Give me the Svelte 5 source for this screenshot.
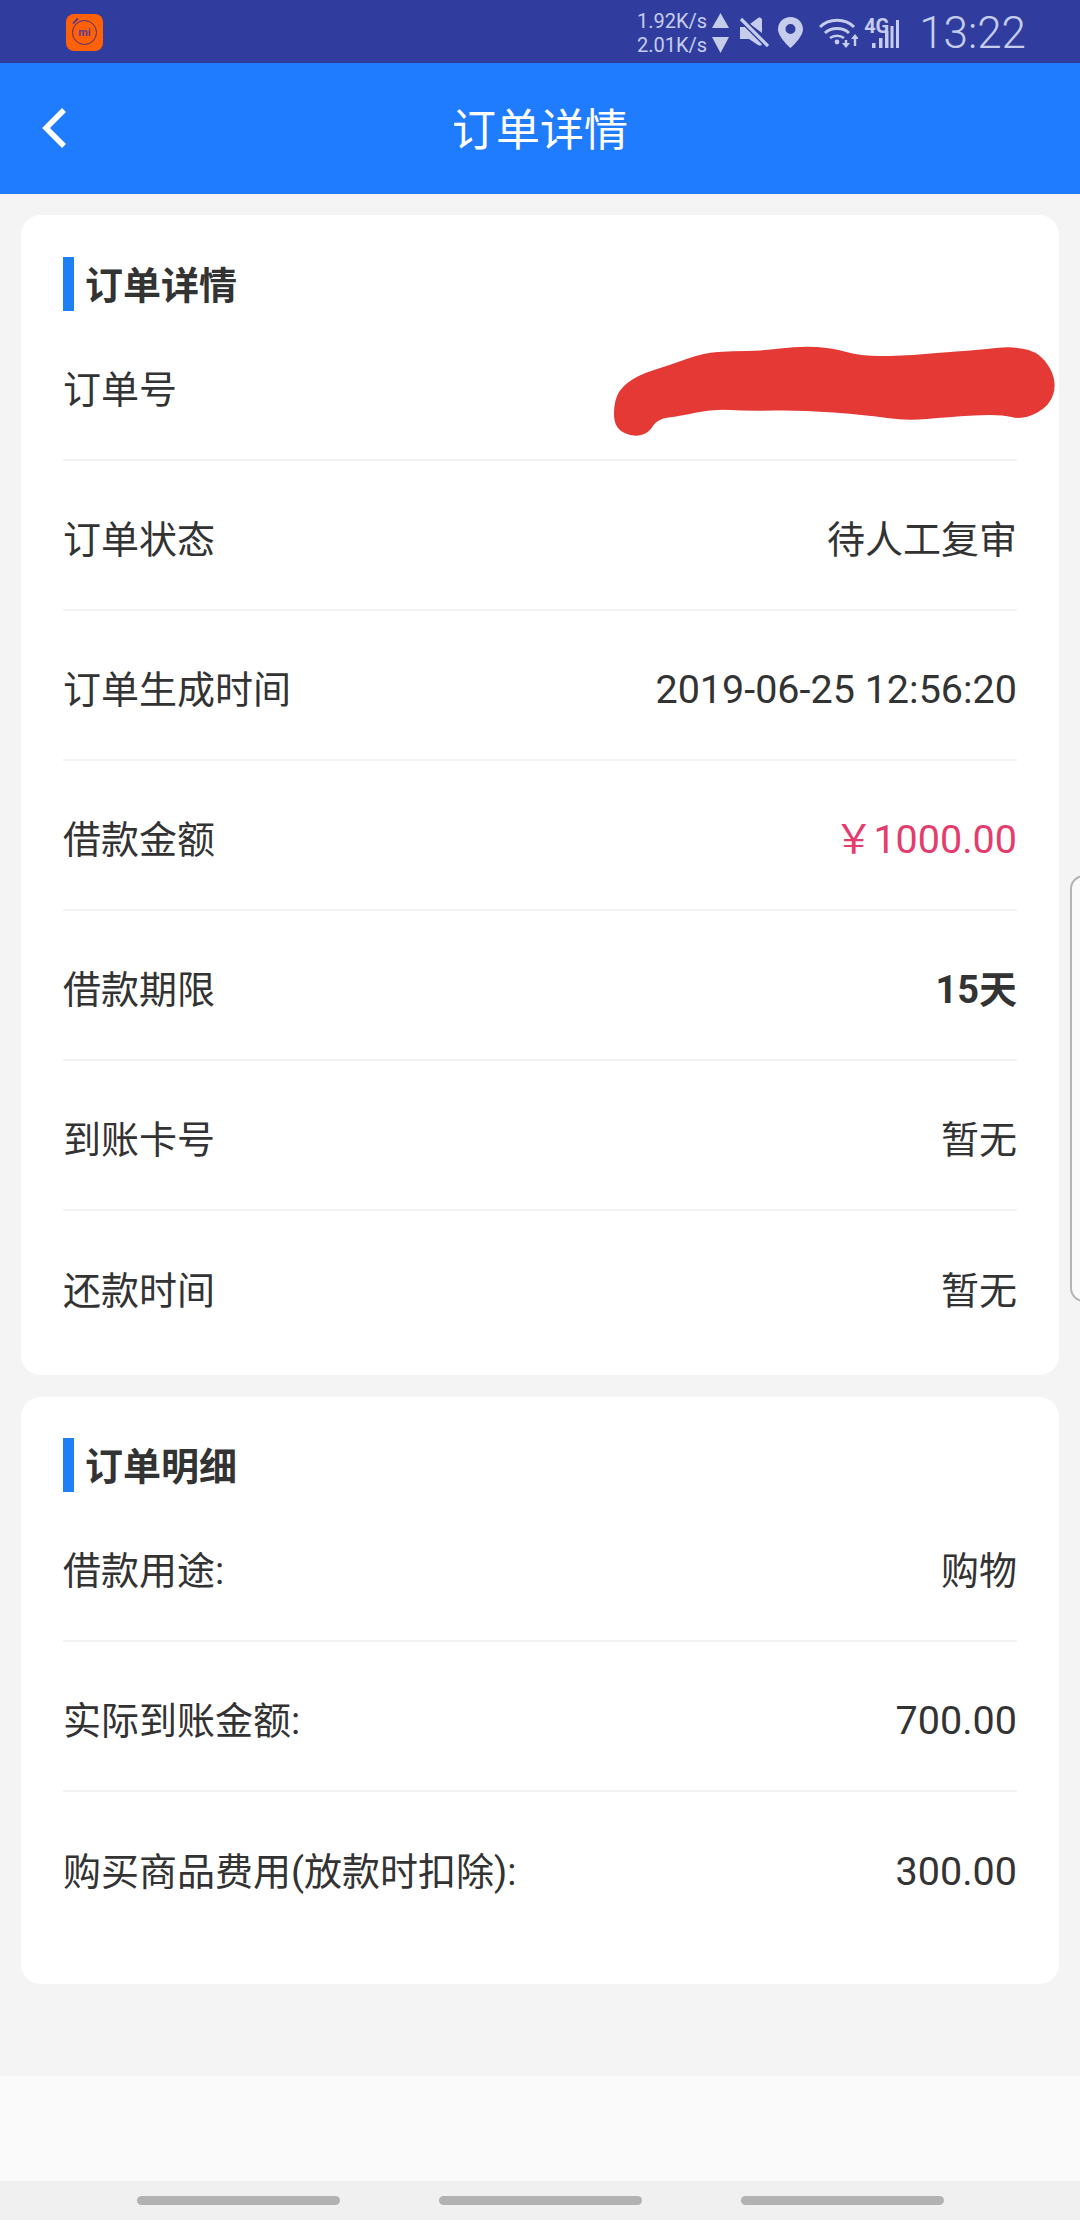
<script>
  const details = [
    { label: "订单号", value: "", redacted: true },
    { label: "订单状态", value: "待人工复审" },
    { label: "订单生成时间", value: "2019-06-25 12:56:20", kind: "num" },
    { label: "借款金额", value: "￥1000.00", kind: "num money" },
    { label: "借款期限", value: "15天", kind: "strong" },
    { label: "到账卡号", value: "暂无" },
    { label: "还款时间", value: "暂无" },
  ];

  const breakdown = [
    { label: "借款用途:", value: "购物" },
    { label: "实际到账金额:", value: "700.00", kind: "num" },
    { label: "购买商品费用(放款时扣除):", value: "300.00", kind: "num" },
  ];

  // outline of the hand-drawn red mark, smoothed through segment midpoints
  const scribblePoints = [
    [3, 67], [8, 46], [28, 31], [60, 21], [93, 9], [123, 7], [150, 7], [190, 2],
    [223, 4], [250, 12], [290, 12], [340, 8], [367, 6], [405, 2], [432, 10],
    [447, 37], [440, 62], [413, 76], [390, 70], [337, 73], [297, 77], [257, 71],
    [190, 66], [137, 67], [103, 65], [70, 72], [47, 75], [39, 89], [23, 93],
    [6, 85],
  ];

  function smoothPath(points) {
    const mid = (a, b) => [(a[0] + b[0]) / 2, (a[1] + b[1]) / 2];
    const start = mid(points[points.length - 1], points[0]);
    let d = `M${start[0]} ${start[1]}`;
    points.forEach((p, i) => {
      const m = mid(p, points[(i + 1) % points.length]);
      d += `Q${p[0]} ${p[1]} ${m[0]} ${m[1]}`;
    });
    return d + "Z";
  }

  const scribble = smoothPath(scribblePoints);
</script>

<div class="page">
  <div class="statusbar">
    <div class="mi-app">
      <div class="mi-ring"><span>mi</span></div>
    </div>
    <div class="status-right">
      <div class="speed">
        <span>1.92K/s</span>
        <span>2.01K/s</span>
      </div>
      <svg class="arrows" viewBox="0 0 17 40" width="17" height="40">
        <path d="M8.5 0 17 15H0z" />
        <path d="M0 24h17L8.5 40z" />
      </svg>
      <svg class="mute" viewBox="0 0 30 31" width="30" height="31">
        <path d="M1 10h6l1-1 15 15v2c0 3-2 3-4 2l-9-6H1z" />
        <path d="M11 7l8-6c2-1 4 0 4 2v13z" />
        <path d="M2 2l27 27" fill="none" stroke="#303d9f" stroke-width="6" />
        <path d="M2 2l27 27" fill="none" stroke="currentColor" stroke-width="3.2" />
      </svg>
      <svg class="pin" viewBox="0 0 25 31" width="25" height="31">
        <path
          fill-rule="evenodd"
          d="M12.5 0C5.6 0 0 5.4 0 12.2 0 20 12.5 31 12.5 31S25 20 25 12.2C25 5.4 19.4 0 12.5 0zm0 17a5 5 0 1 1 0-10 5 5 0 0 1 0 10z"
        />
      </svg>
      <svg class="wifi" viewBox="0 0 39 31" width="39" height="31">
        <g fill="none" stroke="currentColor">
          <path d="M1 10C10 1 26 1 35 10" stroke-width="3" />
          <path d="M6 16C12 10 24 10 30 16" stroke-width="3" />
          <path d="M11 21C15 18 21 18 25 21" stroke-width="2.6" />
          <path d="M27 23v5" stroke-width="2.4" />
          <path d="M36 21v8" stroke-width="2.4" />
        </g>
        <circle cx="18" cy="25" r="2.4" />
        <path d="M23 26h8l-4 5zM32 22l4-5 4 5z" />
      </svg>
      <div class="signal">
        <span class="net">4G</span>
        <svg viewBox="0 0 36 30" width="36" height="30">
          <rect x="9" y="25" width="3.5" height="5" />
          <rect x="16" y="20" width="3.5" height="10" />
          <rect x="22" y="13" width="3.5" height="17" />
          <rect x="27.5" y="8" width="3" height="22" />
          <rect x="33" y="2" width="3" height="28" />
        </svg>
      </div>
      <span class="clock">13:22</span>
    </div>
  </div>

  <header class="topbar">
    <svg class="back" viewBox="0 0 26 42" width="26" height="42">
      <path d="M23 3 5 21l18 18" fill="none" stroke="#fff" stroke-width="5.5" />
    </svg>
    <h1>订单详情</h1>
  </header>

  <main class="content">
    <section class="card first">
      <h2><span>订单详情</span></h2>
      {#each details as row}
        <div class="row">
          <span>{row.label}</span>
          {#if row.redacted}
            <svg class="scribble" viewBox="0 0 450 95" width="450" height="95">
              <path d={scribble} fill="#e53935" />
            </svg>
          {:else}
            <span class={row.kind}>{row.value}</span>
          {/if}
        </div>
      {/each}
    </section>

    <section class="card second">
      <h2><span>订单明细</span></h2>
      {#each breakdown as row}
        <div class="row">
          <span>{row.label}</span>
          <span class={row.kind}>{row.value}</span>
        </div>
      {/each}
    </section>
  </main>

  <div class="blank"></div>

  <nav class="navbar">
    <i></i>
    <i></i>
    <i></i>
  </nav>

  <div class="edge-handle"></div>
</div>

<style>
  :global(body) {
    margin: 0;
  }

  .page {
    position: relative;
    width: 1080px;
    height: 2220px;
    display: flex;
    flex-direction: column;
    overflow: hidden;
    background: #f4f4f4;
    font-family: Roboto, "Noto Sans CJK SC", sans-serif;
    color: #333;
  }

  .statusbar {
    height: 63px;
    flex: none;
    display: flex;
    align-items: center;
    justify-content: space-between;
    padding: 0 54px 0 66px;
    background: #303d9f;
    color: #c6cdea;
  }

  .mi-app {
    width: 37px;
    height: 37px;
    margin-top: 1px;
    display: flex;
    align-items: center;
    justify-content: center;
    border-radius: 8px;
    background: #ff6108;
  }

  .mi-ring {
    position: relative;
    width: 25px;
    height: 25px;
    box-sizing: border-box;
    display: flex;
    align-items: center;
    justify-content: center;
    border: 1px solid #4a2f78;
    border-radius: 50%;
    font-size: 11px;
    font-weight: 700;
    line-height: 11px;
    color: #5b3a8c;
  }

  .mi-ring::before {
    content: "";
    position: absolute;
    left: -1px;
    top: -1px;
    width: 7px;
    height: 2px;
    background: #5b3a8c;
    transform: rotate(-45deg);
  }

  .status-right {
    display: flex;
    align-items: center;
    padding-top: 2px;
  }

  .status-right svg {
    fill: currentColor;
    flex: none;
  }

  .speed {
    display: flex;
    flex-direction: column;
    font-size: 20px;
    line-height: 24px;
    margin-top: 1px;
  }

  .arrows {
    margin-left: 5px;
  }

  .mute {
    margin-left: 10px;
  }

  .pin {
    margin-left: 9px;
  }

  .wifi {
    margin-left: 16px;
  }

  .signal {
    position: relative;
    width: 36px;
    height: 30px;
    margin-left: 5px;
  }

  .net {
    position: absolute;
    left: 1px;
    top: -2px;
    font-size: 20px;
    font-weight: 700;
    line-height: 20px;
  }

  .clock {
    margin-left: 20px;
    font-size: 44px;
    font-weight: 300;
    line-height: 50px;
  }

  .topbar {
    position: relative;
    height: 131px;
    flex: none;
    display: flex;
    align-items: center;
    justify-content: center;
    background: #1f7cff;
  }

  .back {
    position: absolute;
    left: 41px;
    top: 44px;
  }

  h1 {
    margin: 4px 0 0;
    font-size: 44px;
    font-weight: 400;
    line-height: 50px;
    color: #fff;
  }

  .content {
    flex: 1;
    display: flex;
    flex-direction: column;
    gap: 22px;
    padding: 21px 21px 0;
  }

  .card {
    padding: 42px 42px 14px;
    border-radius: 20px;
    background: #fff;
  }

  .card.second {
    padding-top: 41px;
    padding-bottom: 42px;
  }

  h2 {
    margin: 0;
    height: 54px;
    box-sizing: border-box;
    display: flex;
    align-items: center;
    padding: 3px 0 0 11px;
    border-left: 11px solid #1f80f5;
    font-size: 38px;
    font-weight: 700;
    line-height: 50px;
    color: #333;
  }

  .row {
    position: relative;
    height: 150px;
    box-sizing: border-box;
    padding-top: 9px;
    display: flex;
    align-items: center;
    justify-content: space-between;
    border-bottom: 2px solid #f2f2f2;
    font-size: 38px;
    line-height: 50px;
  }

  .row:last-child {
    border-bottom: 0;
  }

  .num {
    font-size: 39.5px;
  }

  .money {
    color: #e23d6d;
  }

  .strong {
    font-weight: 700;
  }

  .scribble {
    position: absolute;
    right: -43px;
    top: 33px;
  }

  .blank {
    height: 105px;
    flex: none;
    background: #fafafa;
  }

  .navbar {
    height: 39px;
    flex: none;
    display: flex;
    justify-content: center;
    gap: 99px;
    padding-top: 15px;
    box-sizing: border-box;
    background: #f0f0f0;
  }

  .navbar i {
    width: 203px;
    height: 9px;
    border-radius: 5px;
    background: #b2b2b2;
  }

  .edge-handle {
    position: absolute;
    left: 1070px;
    top: 875px;
    width: 30px;
    height: 427px;
    box-sizing: border-box;
    border: 2px solid #b4b4b4;
    border-radius: 14px;
    background: #fafafa;
  }
</style>
